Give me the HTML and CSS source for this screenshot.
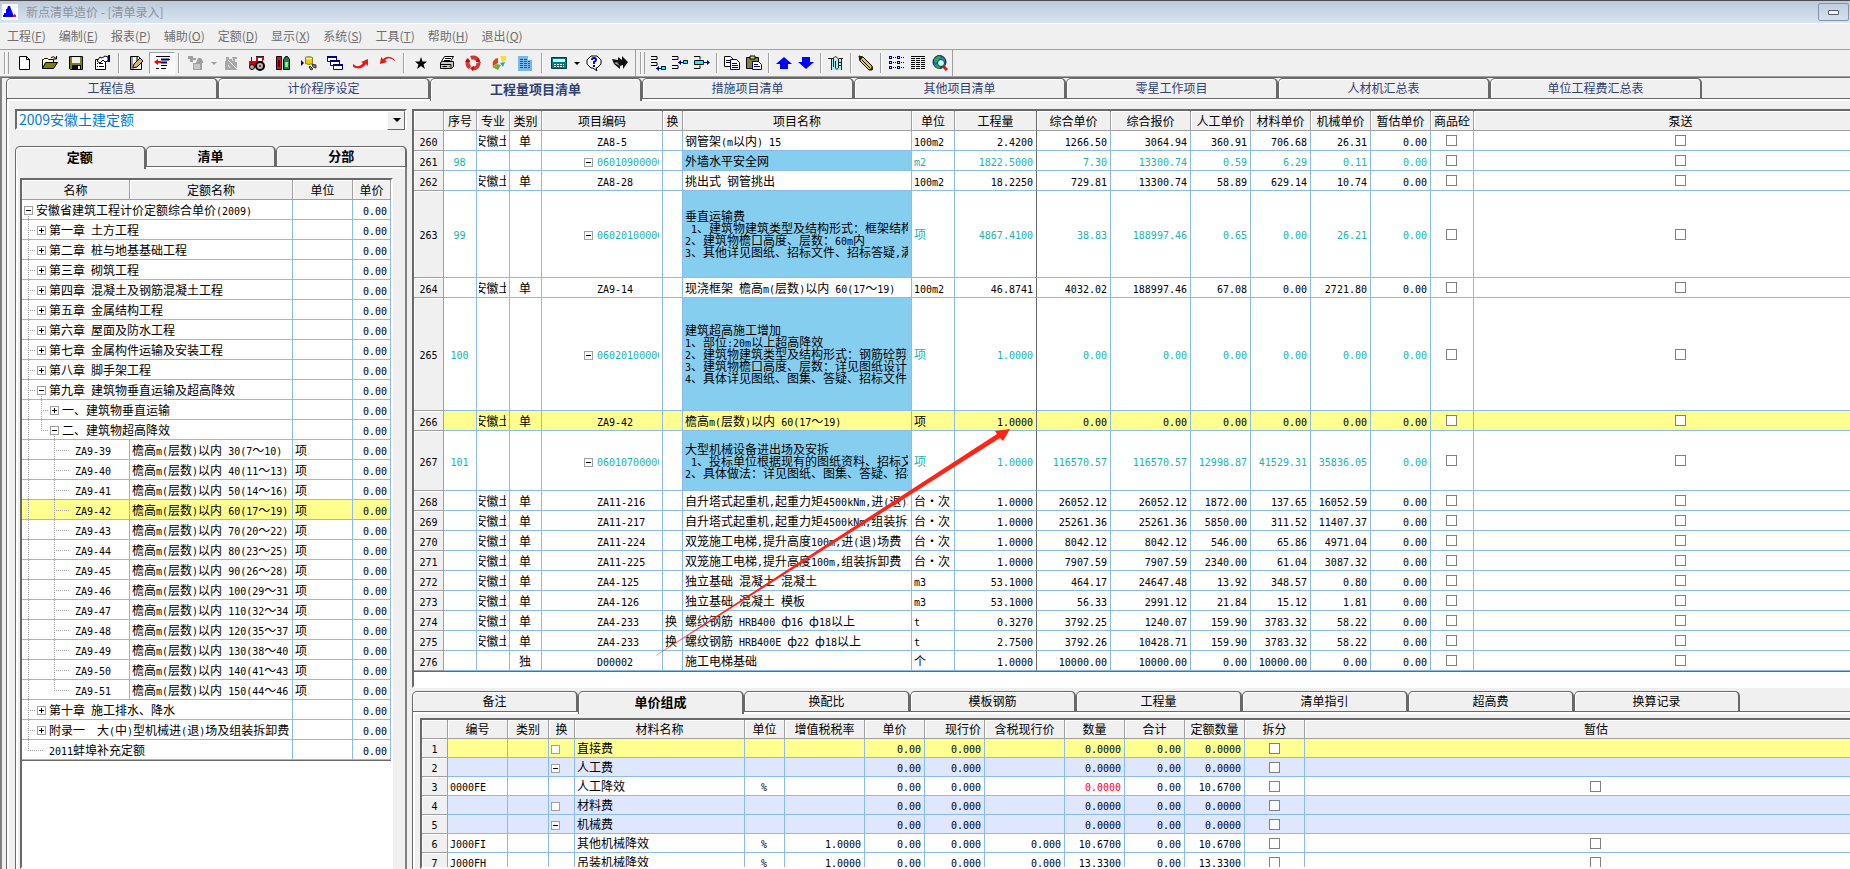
FILE: index.html
```html
<!DOCTYPE html>
<html lang="zh-CN">
<head>
    <meta charset="UTF-8">
    <meta name="viewport" content="width=device-width, initial-scale=1.0">
    <title>新点清单造价 - [清单录入]</title>
    <link rel="stylesheet" href="styles.css">
</head>
<body>

<header class="titlebar">
    <svg class="logo" viewBox="0 0 16 16"><rect width="16" height="16" fill="#fff"/><path d="M6 2h2l1 3 2 5v3H1v-2h1V9h2V5h1z" fill="#00f"/><path d="M12 10h1v1h1v2h-3v-2h1z" fill="#f01010"/></svg>
    <span class="title">新点清单造价 - [清单录入]</span>
    <button class="min-btn" aria-label="最小化"><i></i></button>
</header>

<nav class="menubar">
    <button>工程(<u>F</u>)</button>
    <button>编制(<u>E</u>)</button>
    <button>报表(<u>P</u>)</button>
    <button>辅助(<u>O</u>)</button>
    <button>定额(<u>D</u>)</button>
    <button>显示(<u>X</u>)</button>
    <button>系统(<u>S</u>)</button>
    <button>工具(<u>T</u>)</button>
    <button>帮助(<u>H</u>)</button>
    <button>退出(<u>Q</u>)</button>
</nav>

<div class="toolbar">
    <div class="tool-group">
        <i class="grip"></i>
        <button aria-label="新建"><svg viewBox="0 0 16 16"><path d="M3.500 1.500h7l3 3v10h-10z" fill="#fff" stroke="#000"/><path d="M10.500 1.500v3h3" fill="none" stroke="#000"/></svg></button>
        <button aria-label="打开"><svg viewBox="0 0 16 16"><path d="M.5 13.500v-9h1l1-1h3l1 1h5v3" fill="#ff9" stroke="#000"/><path d="M.5 13.500l3-6h12l-4 6z" fill="#808000" stroke="#000"/><path d="M9 2.500q3-2 5 1M14.500 1v3h-3" fill="none" stroke="#000"/></svg></button>
        <button aria-label="保存"><svg viewBox="0 0 16 16"><path d="M1.500 1.500h13v13h-12l-1-1z" fill="#808000" stroke="#000"/><path d="M4 2h8v6H4z" fill="#eee"/><path d="M4 10h9v4H4z" fill="#000"/><path d="M10 11h2v3h-2z" fill="#eee"/></svg></button>
        <button aria-label="属性"><svg viewBox="0 0 16 16"><path d="M1.500 4.500h10v10h-10z" fill="#fff" stroke="#000"/><path d="M3 8.500h1m1 0h4M3 11.500h1m1 0h5" stroke="#000"/><path d="M3 6l3-4 2 1 3-2 3 1v4l-3 1-2-2-3 3z" fill="#fff" stroke="#000"/><path d="M14 0h2v7h-2z" fill="#000080"/></svg></button>
        <i class="sep"></i>
        <button aria-label="编辑"><svg viewBox="0 0 16 16"><path d="M2.500 1.500h8l3 3v10h-11z" fill="#fff" stroke="#000"/><path d="M3 2v12h2V2z" fill="#999"/><path d="M9 2v4h4" fill="#9dd" stroke="#000"/><path d="M5 12l1-3 6-6 3 3-6 6-4 1z" fill="#e8b060" stroke="#000"/></svg></button>
        <button class="pressed" aria-label="缩进"><svg viewBox="0 0 16 16"><path d="M2 1.500h14M7 4.500h9M7 10.500h6M2 13.500h3m2 0h5" stroke="#000"/><path d="M7 4.500h8M7 7.500h6" stroke="#000080" stroke-width="2"/><path d="M0 7l4-3v2h3v2H4v2z" fill="#f00"/></svg></button>
        <i class="sep"></i>
        <button aria-label="导入" disabled><svg viewBox="0 0 16 16"><path d="M0 1h5v2h3v2H5v2H2V4H0zM10 3h3l2 3v2h-1v7H5V8h3z" fill="#a0a0a0"/><path d="M7 9v5m2-5v5m2-5v5" stroke="#eee"/></svg></button>
        <button class="drop" aria-label="更多导入" disabled></button>
        <button aria-label="检查" disabled><svg viewBox="0 0 16 16"><path d="M3 2h3v2h3V2h5v2h-2v3h2v8H2V6h1z" fill="#a8a8a8"/><path d="M5 5l9 9M9 3l1 3m-5 4l2 3" stroke="#eee"/></svg></button>
        <button aria-label="机械"><svg viewBox="0 0 16 16"><path d="M0 6h7V2h8v3h-1v6H0z" fill="#e00010"/><path d="M9 3h4v3H9z" fill="#fff"/><path d="M2 2h1v4H2zM7 1h8v1H7z" fill="#222"/><circle cx="3" cy="12" r="2.500" fill="#aaa" stroke="#000"/><circle cx="11" cy="11" r="4" fill="#bbb" stroke="#000" stroke-width="2"/><circle cx="11" cy="11" r="1" fill="#800"/></svg></button>
        <button aria-label="对比"><svg viewBox="0 0 16 16"><path d="M1.500 1.500h5v13h-5z" fill="#d01020" stroke="#000"/><path d="M3 5h2v7H3z" fill="#600"/><path d="M8.500 4.500l2-3h2l2 3v10h-6z" fill="#208040" stroke="#000"/><path d="M10 7h3v5h-3z" fill="#8e8"/></svg></button>
        <button aria-label="数据"><svg viewBox="0 0 16 16"><path d="M0 5l3 3-3 3z" fill="#000080"/><path d="M4.500 2.500q3.500-2 7 0v6q-3.500 2-7 0z" fill="#ec0" stroke="#880"/><path d="M5 3.500q3 1 6 0" stroke="#fff" fill="none"/><path d="M11 9l4 1v3l-3-1zM9 11l3 3-2 1-2-3z" fill="#887" stroke="#333"/></svg></button>
        <button aria-label="窗口"><svg viewBox="0 0 16 16"><g fill="#fff" stroke="#000080"><path d="M.5 1.500h9v5h-9z"/><path d="M3.500 5.500h9v5h-9z"/><path d="M6.500 9.500h9v5h-9z"/></g><path d="M0 1h10v2H0zM3 5h10v2H3zM6 9h10v2H6z" fill="#000080"/></svg></button>
        <button aria-label="上移"><svg viewBox="0 0 16 16"><path d="M0 9q6 5 10-1L8 7l7-3v7l-2-2q-5 7-13 3z" fill="#e81818"/></svg></button>
        <button aria-label="撤销"><svg viewBox="0 0 16 16"><path d="M16 5Q10-1 4 4L2 2 1 9l7-2-2-2q4-4 10 1z" fill="#e81818"/></svg></button>
        <i class="sep"></i>
        <button aria-label="收藏"><svg viewBox="0 0 16 16"><path d="M8 2l1.500 4.500H14l-3.500 3L12 14l-4-3-4 3 1.500-4.500L2 6.500h4.500z" fill="#000"/></svg></button>
        <button aria-label="打印"><svg viewBox="0 0 16 16"><path d="M5.500 1.500h9l-3 5h-9z" fill="#fff" stroke="#000"/><path d="M6 3.500h6M5 5.500h6" stroke="#000"/><path d="M1.500 7.500l2-1h11v5l-2 2h-11z" fill="#ccc" stroke="#000"/><path d="M1 9.500h11v4M3.500 11.500h7" stroke="#000" fill="none"/><path d="M8 11h2v1H8z" fill="#cc0"/></svg></button>
        <button aria-label="刷新"><svg viewBox="0 0 16 16"><circle cx="8" cy="8" r="5.500" fill="none" stroke="#e03030" stroke-width="4" stroke-dasharray="9 2.500"/><path d="M3 3l2 4H0zM13 3l3 5-5-1zM8 16l-3-3 4-2z" fill="#b01010"/></svg></button>
        <button aria-label="图表"><svg viewBox="0 0 16 16"><path d="M7 8V3a6 6 0 0 0-5 8z" fill="#e04020"/><path d="M6 9l-5 3 6 3 3-5z" fill="#70b030"/><path d="M9 1h6v5l-4 1z" fill="#fd3"/><path d="M9 8l5-1-2 5z" fill="#39d"/></svg></button>
        <button aria-label="报表"><svg viewBox="0 0 16 16"><path d="M1 1h10l4 4v11H1z" fill="#78b8e8"/><path d="M11 1v4h4" fill="#dff"/><path d="M3 4.500h7M3 6.500h10M3 8.500h10M3 10.500h10M3 12.500h10" stroke="#357" stroke-dasharray="3 1"/></svg></button>
        <i class="sep"></i>
        <button aria-label="计算器"><svg viewBox="0 0 16 16"><path d="M.5 2.500h15v11H.5z" fill="#008080" stroke="#003c3c"/><path d="M2 4h12v3H2z" fill="#cfe"/><path d="M3 9.500h10M3 11.500h10" stroke="#fff" stroke-dasharray="2 1"/></svg></button>
        <button class="drop" aria-label="更多工具"></button>
        <button aria-label="帮助"><svg viewBox="0 0 16 16"><path d="M5 1h6l4 4v4l-4 4h-1l1 3-4-3H5L1 9V5z" fill="#fff" stroke="#000"/><path d="M6 5q0-2 2-2t2 2q0 1-2 2v2m0 1v2" fill="none" stroke="#00d" stroke-width="2"/></svg></button>
        <button aria-label="前进"><svg viewBox="0 0 16 16"><path d="M0 4l6 1V2l4 3V1l6 6-5 7v-4l-3 1v3L2 9z" fill="#111"/><path d="M2 8l6 3-3-4z" fill="#999"/></svg></button>
    </div>
    <div class="tool-group narrow">
        <i class="grip"></i>
        <button aria-label="追加行"><svg viewBox="0 0 16 16"><path d="M1 1.500h6v3H1m0 3h6v3H1" fill="none" stroke="#000"/><path d="M6 13.500h5" stroke="#000080"/><path d="M9 11v5l-3-2.500z" fill="#000080"/><path d="M11.500 11.500h4v3h-4z" fill="#0ff" stroke="#000"/></svg></button>
        <button aria-label="插入行"><svg viewBox="0 0 16 16"><path d="M0 1.500h6v3H0m0 6h6v3H0" fill="none" stroke="#000"/><path d="M6 7.500h5" stroke="#000080"/><path d="M9 5v5L6 7.500z" fill="#000080"/><path d="M11.500 5.500h4v3h-4z" fill="#0ff" stroke="#000"/></svg></button>
        <button aria-label="插入子行"><svg viewBox="0 0 16 16"><path d="M0 1.500h6v3M6 10.500v3H0" fill="none" stroke="#000"/><path d="M.5 5.500h9v4h-9z" fill="#0ff" stroke="#000"/><path d="M9 7.500h5" stroke="#000080"/><path d="M13 5v5l3-2.500z" fill="#000080"/></svg></button>
        <i class="sep"></i>
        <button aria-label="复制"><svg viewBox="0 0 16 16"><path d="M.5 1.500h6l3 3v7h-9z" fill="#fff" stroke="#000"/><path d="M2 5.500h5M2 7.500h5" stroke="#000"/><path d="M6.500 4.500h6l3 3v7h-9z" fill="#fff" stroke="#000080"/><path d="M8 8.500h5m-5 2h6m-6 2h6" stroke="#000080"/></svg></button>
        <button aria-label="粘贴"><svg viewBox="0 0 16 16"><path d="M.5 2.500h12v11H.5z" fill="#808040" stroke="#000"/><path d="M4 1h5v3H4z" fill="#dd6" stroke="#000"/><path d="M6.500 6.500h6l3 3v5h-9z" fill="#fff" stroke="#000080"/><path d="M8 9.500h4m-4 2h6" stroke="#000080"/></svg></button>
        <i class="sep"></i>
        <button aria-label="向上"><svg viewBox="0 0 16 16"><path d="M8 2l8 7h-4v5H4V9H0z" fill="#00f"/></svg></button>
        <button aria-label="向下"><svg viewBox="0 0 16 16"><path d="M8 14l8-7h-4V2H4v5H0z" fill="#00f"/></svg></button>
        <i class="sep"></i>
        <button aria-label="附件"><svg viewBox="0 0 16 16"><path d="M4 4h10v11H4z" fill="#aee"/><path d="M0 3.500h5M11 3.500h4M3.500 3v12M13.500 4v11M5.500 12V3q1-2 3-1l2 2v9q-2 3-3 0V6M10 7.500h3m-3 3h3" fill="none" stroke="#222"/></svg></button>
        <i class="sep"></i>
        <button aria-label="标记"><svg viewBox="0 0 16 16"><path d="M1 1l4 1 9 9v4h-3L2 6z" fill="#e8d020" stroke="#000"/><path d="M1 1l4 1-3 4zM11 15h4v-4z" fill="#222"/><path d="M4 5l8 8" stroke="#000"/></svg></button>
        <i class="sep"></i>
        <button aria-label="列表"><svg viewBox="0 0 16 16"><path d="M1 2.500h3M1 7.500h3M1 12.500h3M9 2.500h3M9 7.500h3M9 12.500h3" stroke="#000080" stroke-width="3"/><path d="M2 2.500h1M2 7.500h1M2 12.500h1M10 2.500h1M10 7.500h1M10 12.500h1" stroke="#fff"/><path d="M5 2.500h3M5 7.500h3M5 12.500h3M13 2.500h3M13 7.500h3M13 12.500h3" stroke="#000" stroke-dasharray="1 1"/></svg></button>
        <button aria-label="表格"><svg viewBox="0 0 16 16"><path d="M1 1.500h14" stroke="#000"/><path d="M1 3.500h14M1 5.500h14M1 7.500h14M1 9.500h14M1 11.500h14M1 13.500h14" stroke="#000" stroke-dasharray="4 1"/></svg></button>
        <button aria-label="网络查询"><svg viewBox="0 0 16 16"><circle cx="7.500" cy="7" r="6.500" fill="#2060d0" stroke="#124"/><path d="M2 4l4-3 3 1-2 4-4 2zM2 10l4-1 2 4-2 1zM10 2l3 3-2 1z" fill="#20b040"/><circle cx="9" cy="8" r="3.500" fill="#bff" stroke="#234"/><path d="M11 11l4 4" stroke="#d02010" stroke-width="3"/></svg></button>
    </div>
</div>

<main class="workspace">
    <div class="tabs main-tabs">
        <button class="tab">工程信息</button>
        <button class="tab">计价程序设定</button>
        <button class="tab active">工程量项目清单</button>
        <button class="tab">措施项目清单</button>
        <button class="tab">其他项目清单</button>
        <button class="tab">零星工作项目</button>
        <button class="tab">人材机汇总表</button>
        <button class="tab">单位工程费汇总表</button>
    </div>

    <div class="tab-page main-page">
        <section class="quota-panel">
            <div class="combo">
                <select aria-label="定额库"><option>2009安徽土建定额</option></select>
            </div>
            <div class="tabs quota-tabs">
                <button class="tab active">定额</button>
                <button class="tab">清单</button>
                <button class="tab">分部</button>
            </div>
            <div class="tab-page quota-page">
                <div class="grid">
                    <table class="quota-table">
                        <colgroup><col class="w108"><col><col class="w60"><col class="w38"></colgroup>
                        <thead><tr><th>名称</th><th>定额名称</th><th>单位</th><th>单价</th></tr></thead>
                        <tbody id="quotaBody"></tbody>
                    </table>
                </div>
            </div>
        </section>

        <section class="bill-panel">
            <div class="grid bill-grid">
                <table class="bill-table">
                    <colgroup>
                        <col class="w30"><col class="w33"><col class="w33"><col class="w32"><col class="w121"><col class="w20"><col class="w229"><col class="w43"><col class="w82"><col class="w74"><col class="w80"><col class="w60"><col class="w60"><col class="w60"><col class="w60"><col class="w43"><col>
                    </colgroup>
                    <thead>
                        <tr><th></th><th>序号</th><th>专业</th><th>类别</th><th>项目编码</th><th>换</th><th>项目名称</th><th>单位</th><th class="frozen">工程量</th><th>综合单价</th><th>综合报价</th><th>人工单价</th><th>材料单价</th><th>机械单价</th><th>暂估单价</th><th>商品砼</th><th>泵送</th></tr>
                    </thead>
                    <tbody id="billBody"></tbody>
                </table>
                <!-- red marker from row 275 to the quantity of row 266 -->
                <svg class="marker" width="360" height="232" viewBox="0 0 360 232">
                    <defs><linearGradient id="fade" x1="0" y1="1" x2="1" y2="0"><stop offset="0" stop-color="#ff2414" stop-opacity=".4"/><stop offset=".15" stop-color="#ff2414"/></linearGradient></defs>
                    <path d="M1 228L342 7 340 4 355 2 348 14 345 11 1 229z" fill="url(#fade)"/>
                </svg>
            </div>

            <div class="tabs detail-tabs">
                <button class="tab">备注</button>
                <button class="tab active">单价组成</button>
                <button class="tab">换配比</button>
                <button class="tab">模板钢筋</button>
                <button class="tab">工程量</button>
                <button class="tab">清单指引</button>
                <button class="tab">超高费</button>
                <button class="tab">换算记录</button>
            </div>
            <div class="tab-page detail-page">
                <div class="grid">
                    <table class="detail-table">
                        <colgroup>
                            <col class="w26"><col class="w60"><col class="w41"><col class="w26"><col class="w170"><col class="w40"><col class="w80"><col class="w60"><col class="w60"><col class="w80"><col class="w60"><col class="w60"><col class="w60"><col class="w60"><col>
                        </colgroup>
                        <thead>
                            <tr><th></th><th>编号</th><th>类别</th><th>换</th><th>材料名称</th><th>单位</th><th>增值税税率</th><th>单价</th><th class="right">现行价</th><th>含税现行价</th><th>数量</th><th>合计</th><th>定额数量</th><th>拆分</th><th>暂估</th></tr>
                        </thead>
                        <tbody id="detailBody"></tbody>
                    </table>
                </div>
            </div>
        </section>
    </div>
</main>

<script src="script.js"></script>
</body>
</html>
```
FILE: styles.css
```css
* {
    box-sizing: border-box;
}
body {
    margin: 0;
    height: 100vh;
    display: flex;
    flex-direction: column;
    overflow: hidden;
    background-color: #f0f0f0;
    color: #000;
    font-family: "Noto Sans CJK SC", sans-serif;
    font-size: 12px;
    line-height: 14px;
}
button, select {
    font: inherit;
    color: inherit;
    padding: 0;
    margin: 0;
    border: none;
    background: none;
}

/* Title bar */
.titlebar {
    display: flex;
    align-items: center;
    height: 24px;
    padding: 0 1px 0 2px;
    border-top: 1px solid #4c4c50;
    border-bottom: 1px solid #fff;
    background: linear-gradient(#bccadb, #d8e4f1);
    color: #8e9298;
}
.logo {
    width: 16px;
    height: 16px;
}
.title {
    flex: 1;
    margin-left: 8px;
}
.min-btn {
    display: flex;
    align-items: center;
    justify-content: center;
    width: 31px;
    height: 18px;
    border: 1px solid #8591b2;
    border-radius: 2px;
}
.min-btn i {
    width: 11px;
    height: 5px;
    border: 1px solid #55586a;
    border-radius: 1px;
    background-color: #f4f4f4;
}

/* Menu */
.menubar {
    display: flex;
    height: 26px;
    padding-left: 1px;
    border-bottom: 1px solid #a0a0a0;
    color: #6d6d6d;
}
.menubar button {
    padding: 0 7px 2px 6px;
}

/* Toolbar */
.toolbar {
    display: flex;
    height: 27px;
    border-bottom: 1px solid #a0a0a0;
}
.tool-group {
    display: flex;
    align-items: center;
    padding-left: 4px;
    padding-right: 2px;
    border-right: 1px solid #a0a0a0;
}
.tool-group button {
    display: flex;
    align-items: center;
    justify-content: center;
    width: 26px;
    height: 22px;
}
.tool-group.narrow {
    padding-right: 1px;
}
.tool-group.narrow button {
    width: 22px;
}
.tool-group svg {
    width: 16px;
    height: 16px;
}
.tool-group .pressed {
    border: 1px solid #fff;
    border-top-color: #a0a0a0;
    border-left-color: #a0a0a0;
    background-color: #f8f8f8;
}
.tool-group .drop {
    width: 9px;
}
.drop::after {
    content: "";
    border: 3px solid transparent;
    border-top-color: #000;
    border-bottom: none;
}
.drop:disabled::after {
    border-top-color: #a0a0a0;
}
.grip {
    width: 5px;
    height: 22px;
    margin-right: 2px;
    border: solid #a0a0a0;
    border-width: 0 1px;
    box-shadow: inset 1px 0 #fff;
}
.sep {
    width: 2px;
    height: 20px;
    margin: 0 3px;
    border-left: 1px solid #a0a0a0;
    border-right: 1px solid #fff;
}

/* Tabs */
.tabs {
    display: flex;
    border-bottom: 1px solid #696969;
}
.tab {
    height: 21px;
    margin-bottom: -1px;
    padding-bottom: 2px;
    border: 1px solid #696969;
    border-right-width: 2px;
    border-radius: 5px 5px 0 0;
    background-color: #f0f0f0;
    box-shadow: inset 1px 1px #fff;
}
.tab.active {
    position: relative;
    z-index: 1;
    height: 23px;
    margin-bottom: -3px;
    border-bottom: none;
    font-weight: bold;
    font-size: 13px;
}
.tab-page {
    flex: 1;
    min-height: 0;
    border-left: 1px solid #696969;
    box-shadow: inset 2px 2px #fff;
}
.main-tabs .tab {
    width: 212px;
    color: #2f4073;
}
.quota-tabs .tab {
    flex: 1;
    font-weight: bold;
    font-size: 13px;
}
.detail-tabs .tab {
    width: 166px;
}

/* Workspace */
.workspace {
    flex: 1;
    min-height: 0;
    display: flex;
    flex-direction: column;
    padding-left: 4px;
    border-top: 1px solid #696969;
    border-left: 2px solid #808080;
}
.main-page {
    display: flex;
    padding: 10px 0 0 8px;
}
.quota-panel {
    display: flex;
    flex-direction: column;
    width: 392px;
    margin-right: 5px;
}
.bill-panel {
    flex: 1;
    min-width: 0;
    display: flex;
    flex-direction: column;
}
.combo {
    position: relative;
    height: 21px;
    margin-bottom: 16px;
    border: 2px solid #fff;
    border-top-color: #696969;
    border-left-color: #696969;
    background-color: #fff;
}
.combo select {
    display: block;
    width: 100%;
    height: 17px;
    padding-left: 2px;
    appearance: none;
    color: #0078d7;
    font-size: 14px;
    line-height: 17px;
}
.combo::before {
    content: "";
    position: absolute;
    top: 0;
    right: 0;
    width: 16px;
    height: 17px;
    border: 1px solid #696969;
    border-top-color: #fff;
    border-left-color: #fff;
    background-color: #f0f0f0;
    pointer-events: none;
}
.combo::after {
    content: "";
    position: absolute;
    top: 7px;
    right: 4px;
    border: 4px solid transparent;
    border-top-color: #000;
    border-bottom: none;
    pointer-events: none;
}
.quota-page {
    display: flex;
    border-right: 2px solid #808080;
    padding: 11px 12px 0 4px;
}
.detail-page {
    display: flex;
    padding: 6px 0 0 7px;
}

/* Grids */
.grid {
    flex: 1;
    min-width: 0;
    overflow: hidden;
    border: 2px solid #fff;
    border-top-color: #696969;
    border-left-color: #696969;
    background-color: #fff;
}
.bill-grid {
    position: relative;
    flex: none;
    margin-bottom: 3px;
    padding-bottom: 14px;
    border-right: none;
}
.detail-page .grid {
    border-right: none;
}
table {
    width: 100%;
    table-layout: fixed;
    border-collapse: separate;
    border-spacing: 0;
    border-bottom: 1px solid #696969;
}
/* the last column runs on past the window edge */
.bill-table, .detail-table {
    width: calc(100% + 38px);
}
th, td {
    height: 20px;
    padding: 0 3px 0 2px;
    border-right: 1px solid #8abbea;
    border-bottom: 1px solid #8abbea;
    text-align: left;
    white-space: pre;
    overflow: hidden;
}
.detail-table th, .detail-table td {
    height: 19px;
}
thead th, .row-no {
    padding: 0;
    border-color: #a0a0a0;
    background-color: #f0f0f0;
    box-shadow: inset 1px 1px #fff;
    font-weight: normal;
    text-align: center;
}
thead .right, td.num {
    text-align: right;
}
thead .right {
    padding-right: 3px;
}
td.center {
    text-align: center;
}
td div {
    overflow: hidden;
}
.major div {
    display: flex;
    justify-content: center;
}
.frozen {
    border-right-color: #696969;
}
.en {
    font-family: "DejaVu Sans Mono", monospace;
    font-size: 10px;
    line-height: 0;
}
.multi {
    line-height: 12px;
}
.item td {
    color: #20b2aa;
}
.item .name {
    background-color: #86ceef;
    color: #000;
}
.group td {
    background-color: #dfe7ff;
}
.selected td {
    background-color: #ffff90;
}
td.red {
    color: #f00;
}
input[type="checkbox"] {
    display: block;
    width: 11px;
    height: 11px;
    margin: 0 auto;
    appearance: none;
    border: 1px solid #808080;
    background-color: #fff;
}

/* Expand boxes and tree lines */
.box {
    display: inline-block;
    flex: none;
    width: 9px;
    height: 9px;
    margin: 0 2px;
    border: 1px solid #a0a0a0;
    background-color: #fff;
    vertical-align: middle;
}
.box.minus {
    background: linear-gradient(#000, #000) center / 5px 1px no-repeat #fff;
}
.box.plus {
    background: linear-gradient(#000, #000) center / 5px 1px no-repeat, linear-gradient(#000, #000) center / 1px 5px no-repeat #fff;
}
.code div {
    padding-left: 38px;
}
.code .no-box {
    padding-left: 53px;
}
.code .box {
    margin-right: 4px;
}
.huan-box {
    padding: 0;
}
.tree {
    padding: 0;
}
.tree div {
    display: flex;
    align-items: center;
    height: 19px;
}
.tree div > span {
    margin-left: 1px;
    padding-top: 1px;
}
.line {
    flex: none;
    display: flex;
    align-items: center;
    width: 13px;
    height: 19px;
    padding-top: 1px;
    background-repeat: no-repeat;
}
.vert, .tee {
    background-image: repeating-linear-gradient(#a0a0a0 0 1px, transparent 1px 2px);
    background-size: 1px 100%;
    background-position: 6px 0;
}
.tee {
    background-image: repeating-linear-gradient(#a0a0a0 0 1px, transparent 1px 2px), repeating-linear-gradient(90deg, #a0a0a0 0 1px, transparent 1px 2px);
    background-size: 1px 100%, 7px 1px;
    background-position: 6px 0, 6px 10px;
}
.last {
    background-image: repeating-linear-gradient(#a0a0a0 0 1px, transparent 1px 2px), repeating-linear-gradient(90deg, #a0a0a0 0 1px, transparent 1px 2px);
    background-size: 1px 10px, 7px 1px;
    background-position: 6px 0, 6px 10px;
}
.dash {
    background-image: repeating-linear-gradient(90deg, #a0a0a0 0 1px, transparent 1px 2px);
    background-size: 7px 1px;
    background-position: 1px 10px;
}
.open {
    background-image: repeating-linear-gradient(#a0a0a0 0 1px, transparent 1px 2px);
    background-size: 1px 5px;
    background-position: 6px 14px;
}
.marker {
    position: absolute;
    left: 241px;
    top: 316px;
    pointer-events: none;
}

/* Column widths */
.w20 { width: 20px; }
.w26 { width: 26px; }
.w30 { width: 30px; }
.w32 { width: 32px; }
.w33 { width: 33px; }
.w38 { width: 38px; }
.w40 { width: 40px; }
.w41 { width: 41px; }
.w43 { width: 43px; }
.w60 { width: 60px; }
.w74 { width: 74px; }
.w80 { width: 80px; }
.w82 { width: 82px; }
.w108 { width: 108px; }
.w121 { width: 121px; }
.w170 { width: 170px; }
.w229 { width: 229px; }
```
FILE: script.js
```js
// kind of tree lines in front of the box: v = vertical, t = tee, l = last, d = dash, o = nothing
const lineClasses = { v: 'vert', t: 'tee', l: 'last', d: 'dash', o: '' };

// [lines, box, name, 定额名称]
const chapters = [
    ['', 'minus', '安徽省建筑工程计价定额综合单价(2009)'],
    ['t', 'plus', '第一章 土方工程'],
    ['t', 'plus', '第二章 桩与地基基础工程'],
    ['t', 'plus', '第三章 砌筑工程'],
    ['t', 'plus', '第四章 混凝土及钢筋混凝土工程'],
    ['t', 'plus', '第五章 金属结构工程'],
    ['t', 'plus', '第六章 屋面及防水工程'],
    ['t', 'plus', '第七章 金属构件运输及安装工程'],
    ['t', 'plus', '第八章 脚手架工程'],
    ['t', 'minus', '第九章 建筑物垂直运输及超高降效'],
    ['vt', 'plus', '一、建筑物垂直运输'],
    ['vl', 'minus', '二、建筑物超高降效'],
    ['votd', '', 'ZA9-39', '檐高m(层数)以内 30(7～10)'],
    ['votd', '', 'ZA9-40', '檐高m(层数)以内 40(11～13)'],
    ['votd', '', 'ZA9-41', '檐高m(层数)以内 50(14～16)'],
    ['votd', '', 'ZA9-42', '檐高m(层数)以内 60(17～19)'],
    ['votd', '', 'ZA9-43', '檐高m(层数)以内 70(20～22)'],
    ['votd', '', 'ZA9-44', '檐高m(层数)以内 80(23～25)'],
    ['votd', '', 'ZA9-45', '檐高m(层数)以内 90(26～28)'],
    ['votd', '', 'ZA9-46', '檐高m(层数)以内 100(29～31'],
    ['votd', '', 'ZA9-47', '檐高m(层数)以内 110(32～34'],
    ['votd', '', 'ZA9-48', '檐高m(层数)以内 120(35～37'],
    ['votd', '', 'ZA9-49', '檐高m(层数)以内 130(38～40'],
    ['votd', '', 'ZA9-50', '檐高m(层数)以内 140(41～43'],
    ['vold', '', 'ZA9-51', '檐高m(层数)以内 150(44～46'],
    ['t', 'plus', '第十章 施工排水、降水'],
    ['t', 'plus', '附录一　大(中)型机械进(退)场及组装拆卸费'],
    ['ld', '', '2011蚌埠补充定额']
];

// [row, 序号, 类别, 编码, 换, 名称, 单位, numbers, height]
const bills = [
    [260, '', '单', 'ZA8-5', '', '钢管架(m以内) 15', '100m2', '2.4200 1266.50 3064.94 360.91 706.68 26.31 0.00'],
    [261, '98', '', '06010900000', '', '外墙水平安全网', 'm2', '1822.5000 7.30 13300.74 0.59 6.29 0.11 0.00'],
    [262, '', '单', 'ZA8-28', '', '挑出式 钢管挑出', '100m2', '18.2250 729.81 13300.74 58.89 629.14 10.74 0.00'],
    [263, '99', '', '06020100000', '', '垂直运输费\n 1、建筑物建筑类型及结构形式：框架结构\n2、建筑物檐口高度、层数：60m内\n3、其他详见图纸、招标文件、招标答疑,满', '项', '4867.4100 38.83 188997.46 0.65 0.00 26.21 0.00', 87],
    [264, '', '单', 'ZA9-14', '', '现浇框架 檐高m(层数)以内 60(17～19)', '100m2', '46.8741 4032.02 188997.46 67.08 0.00 2721.80 0.00'],
    [265, '100', '', '06020100000', '', '建筑超高施工增加\n1、部位:20m以上超高降效\n2、建筑物建筑类型及结构形式：钢筋砼剪力\n3、建筑物檐口高度、层数：详见图纸设计\n4、具体详见图纸、图集、答疑、招标文件', '项', '1.0000 0.00 0.00 0.00 0.00 0.00 0.00', 113],
    [266, '', '单', 'ZA9-42', '', '檐高m(层数)以内 60(17～19)', '项', '1.0000 0.00 0.00 0.00 0.00 0.00 0.00'],
    [267, '101', '', '06010700000', '', '大型机械设备进出场及安拆\n 1、投标单位根据现有的图纸资料、招标文\n2、具体做法：详见图纸、图集、答疑、招标', '项', '1.0000 116570.57 116570.57 12998.87 41529.31 35836.05 0.00', 60],
    [268, '', '单', 'ZA11-216', '', '自升塔式起重机,起重力矩4500kNm,进(退)场', '台·次', '1.0000 26052.12 26052.12 1872.00 137.65 16052.59 0.00'],
    [269, '', '单', 'ZA11-217', '', '自升塔式起重机,起重力矩4500kNm,组装拆卸', '台·次', '1.0000 25261.36 25261.36 5850.00 311.52 11407.37 0.00'],
    [270, '', '单', 'ZA11-224', '', '双笼施工电梯,提升高度100m,进(退)场费', '台·次', '1.0000 8042.12 8042.12 546.00 65.86 4971.04 0.00'],
    [271, '', '单', 'ZA11-225', '', '双笼施工电梯,提升高度100m,组装拆卸费', '台·次', '1.0000 7907.59 7907.59 2340.00 61.04 3087.32 0.00'],
    [272, '', '单', 'ZA4-125', '', '独立基础 混凝土 混凝土', 'm3', '53.1000 464.17 24647.48 13.92 348.57 0.80 0.00'],
    [273, '', '单', 'ZA4-126', '', '独立基础 混凝土 模板', 'm3', '53.1000 56.33 2991.12 21.84 15.12 1.81 0.00'],
    [274, '', '单', 'ZA4-233', '换', '螺纹钢筋 HRB400 ф16 ф18以上', 't', '0.3270 3792.25 1240.07 159.90 3783.32 58.22 0.00'],
    [275, '', '单', 'ZA4-233', '换', '螺纹钢筋 HRB400E ф22 ф18以上', 't', '2.7500 3792.26 10428.71 159.90 3783.32 58.22 0.00'],
    [276, '', '独', 'D00002', '', '施工电梯基础', '个', '1.0000 10000.00 10000.00 0.00 10000.00 0.00 0.00']
];

// [编号, box, 材料名称, 单位, 税率, 单价, 现行价, 含税现行价, 数量, 合计, 定额数量]
const details = [
    ['', 'empty', '直接费', '', '', '0.00', '0.000', '', '0.0000', '0.00', '0.0000'],
    ['', 'minus', '人工费', '', '', '0.00', '0.000', '', '0.0000', '0.00', '0.0000'],
    ['0000FE', '', '人工降效', '%', '', '0.00', '0.000', '', '0.0000', '0.00', '10.6700'],
    ['', 'empty', '材料费', '', '', '0.00', '0.000', '', '0.0000', '0.00', '0.0000'],
    ['', 'minus', '机械费', '', '', '0.00', '0.000', '', '0.0000', '0.00', '0.0000'],
    ['J000FI', '', '其他机械降效', '%', '1.0000', '0.00', '0.000', '0.000', '10.6700', '0.00', '10.6700'],
    ['J000FH', '', '吊装机械降效', '%', '1.0000', '0.00', '0.000', '0.000', '13.3300', '0.00', '13.3300']
];

// latin letters and digits are half as wide as the Chinese ones
function text(value) {
    return String(value).replace(/[\x20-\x7e]+/g, '<span class="en">$&</span>');
}

function cell(value, cls = '') {
    return `<td class="${cls}"><div>${text(value)}</div></td>`;
}

function check(label) {
    return `<td><input type="checkbox" aria-label="${label}"></td>`;
}

function showQuota() {
    document.getElementById('quotaBody').innerHTML = chapters.map(([lines, box, name, quota]) => {
        let tree = [...lines].map(l => `<i class="line ${lineClasses[l]}"></i>`).join('');
        if (box) tree += `<i class="line ${box === 'minus' ? 'open' : ''}"><b class="box ${box}"></b></i>`;
        return `<tr class="${name === 'ZA9-42' ? 'selected' : ''}">
            <td class="tree" colspan="${quota ? 1 : 2}"><div>${tree}<span>${text(name)}</span></div></td>
            ${quota ? cell(quota) : ''}
            ${cell(quota ? '项' : '')}${cell('0.00', 'num')}
        </tr>`;
    }).join('');
}

function showBills() {
    document.getElementById('billBody').innerHTML = bills.map(([no, seq, type, code, swap, name, unit, numbers, height]) => {
        const cls = seq ? 'item' : no === 266 ? 'selected' : '';
        const nums = numbers.split(' ').map((n, i) => cell(n, i === 0 ? 'num frozen' : 'num')).join('');
        return `<tr class="${cls}" ${height ? `style="height:${height}px"` : ''}>
            <th class="row-no" scope="row">${text(no)}</th>
            ${cell(seq, 'center')}
            ${cell(type === '单' ? '安徽土' : '', 'major')}
            ${cell(type, 'center')}
            <td class="code"><div class="${seq ? '' : 'no-box'}">${seq ? '<b class="box minus"></b>' : ''}${text(code)}</div></td>
            ${cell(swap)}
            ${cell(name, name.includes('\n') ? 'name multi' : 'name')}
            ${cell(unit)}${nums}${check(no + ' 商品砼')}${check(no + ' 泵送')}
        </tr>`;
    }).join('');
}

function showDetails() {
    document.getElementById('detailBody').innerHTML = details.map((row, index) => {
        const [code, box, name, unit, ...nums] = row;
        const cls = index === 0 ? 'selected' : box ? 'group' : '';
        return `<tr class="${cls}">
            <th class="row-no" scope="row">${text(index + 1)}</th>
            ${cell(code)}${cell('')}
            <td class="huan-box">${box ? `<b class="box ${box}"></b>` : ''}</td>
            ${cell(name)}${cell(unit, 'center')}
            ${nums.map((n, i) => cell(n, index === 2 && i === 4 ? 'num red' : 'num')).join('')}
            ${check(name + ' 拆分')}${cls ? cell('') : check(name + ' 暂估')}
        </tr>`;
    }).join('');
}

showQuota();
showBills();
showDetails();
```
